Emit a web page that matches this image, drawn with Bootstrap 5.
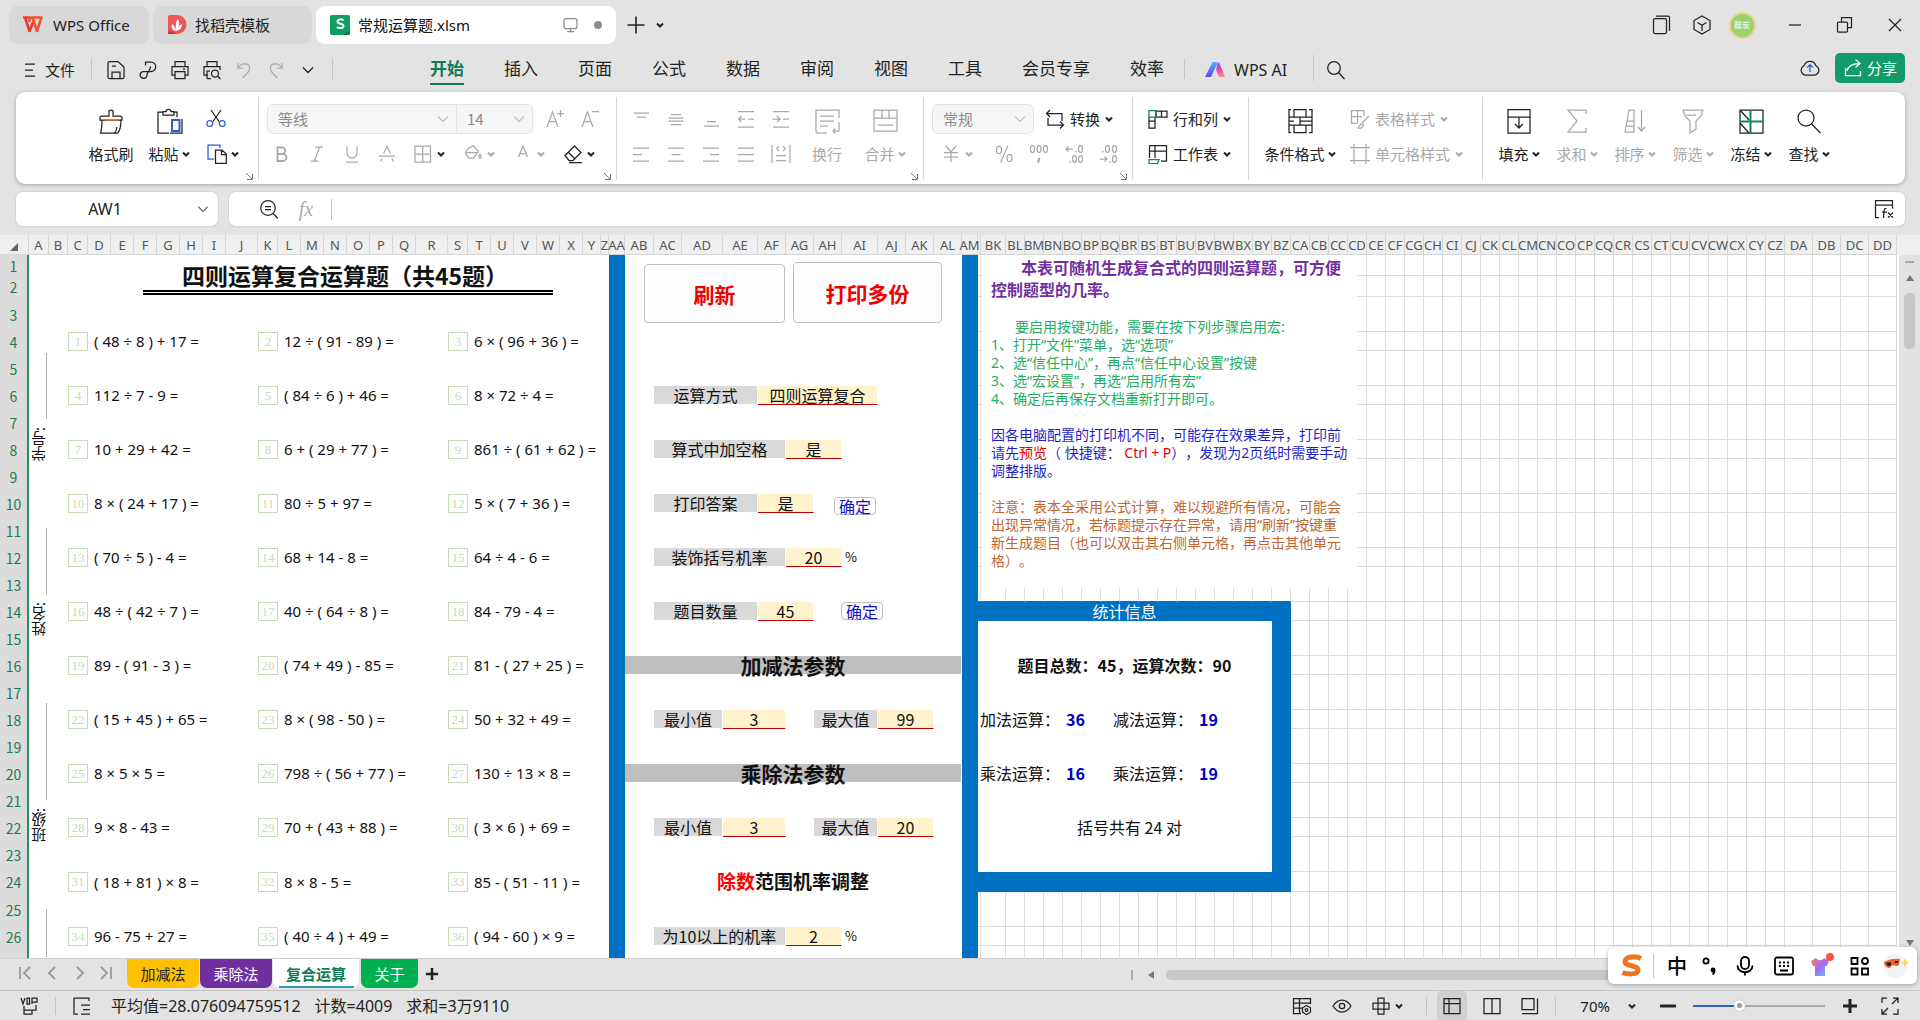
<!DOCTYPE html>
<html lang="zh-CN">
<head>
<meta charset="utf-8">
<meta name="viewport" content="width=device-width, initial-scale=1">
<title>常规运算题.xlsm - WPS Office</title>
<link href="https://cdn.jsdelivr.net/npm/bootstrap@5.3.0/dist/css/bootstrap.min.css" rel="stylesheet">
<style>
:root{--ui:"Noto Sans","Noto Sans CJK SC",sans-serif;--cell:"Noto Sans CJK SC",sans-serif;--green:#0f7b55;--blue:#0070c0}
body{font-family:var(--ui);font-size:15px;line-height:20px;color:#222;background:#e3e3e3;overflow:hidden;text-spacing-trim:space-all}
button{font:inherit;color:inherit;background:none;border:0;padding:0}
a{color:inherit;text-decoration:none}
svg.ic{width:20px;height:20px;fill:none;stroke:currentColor;stroke-width:1.25;flex:none;display:block}
svg.big{width:28px;height:28px}
svg.caret{width:8px;height:8px;fill:none;stroke:currentColor;stroke-width:2;flex:none;display:block}
.dim{color:#a9a9a9}
.slot{width:var(--w,32px);display:flex;align-items:center;justify-content:center;gap:4px;height:30px;flex:none}
.w18{--w:18px}.w26{--w:26px}.w34{--w:34px}.w35{--w:35px}.w40{--w:40px}.w50{--w:50px}
.vline{width:1px;background:#c4c4c4;flex:none}
/* title bar */
.titlebar{height:51px;padding:6px 0 7px 9px;gap:4px}
.doctab{height:38px;border-radius:9px;background:#d8d8d8;padding:0 14px;gap:10px}
.doctab.on{background:#fff;color:#111}
.avatar{width:27px;height:27px;border-radius:50%;background:#9bd26a;border:2px solid #f2cf8d;color:#fff;font:8px/22px var(--cell);text-align:center}
/* menu */
.menubar{height:41px;padding-left:20px;padding-right:15px}
.menutabs{gap:40px;font-size:17px;line-height:24px;font-family:var(--cell)}
.menutabs a{padding:5px 0;display:block}
.menutabs a.on{color:var(--green);font-weight:700;box-shadow:inset 0 -2px var(--green)}
.sharebtn{background:#129a6a;color:#fff;border-radius:5px;width:70px;height:30px}
/* ribbon */
.ribbon{margin:0 15px 0 16px;height:92px;background:#fff;border-radius:9px;box-shadow:0 1px 4px rgba(0,0,0,.28);font-family:var(--cell)}
.rg{position:relative;display:flex;padding-top:12px;height:92px;flex:none}
.rg+.rg::before{content:"";position:absolute;left:0;top:5px;bottom:4px;width:1px;background:#d4d4d4}
.rg .corner{position:absolute;right:4px;bottom:3px;width:9px;height:9px;stroke:#777}
.stack{display:flex;flex-direction:column;gap:5px}
.bigbtn{display:flex;flex-direction:column;align-items:center;width:58px;flex:none;height:66px}
.bigbtn svg.big{margin:3px 0 5px}
.bigbtn .lab{height:28px;display:flex;align-items:center;gap:3px;white-space:nowrap}
.wide{display:flex;align-items:center;gap:5px;height:30px;white-space:nowrap}
.fsel{appearance:none;height:30px;border:1px solid #e4e4e4;background:#f6f6f6;color:#8b8b8b;font-size:15px;padding:0 10px;line-height:20px;opacity:1}
.selwrap{position:relative;display:block}
.selwrap svg{position:absolute;right:9px;top:11px;width:10px;height:8px;stroke:#bbb;fill:none;stroke-width:1.2}
.gA{width:242px;padding-left:66px}.gB{width:358px;padding-left:9px}.gC{width:307px;padding-left:7px}.gD{width:209px;padding-left:9px}.gE{width:116px;padding-left:16px}.gF{width:234px;padding-left:14px}.gG{padding-left:8px}
.gB .fmt{margin-left:-3px}
/* formula bar */
.fbar{margin:8px 15px 0 16px;gap:11px;height:34px}
.fbox{background:#fff;border-radius:7px;box-shadow:0 0 0 1px #d6d6d6,0 1px 1px #b5b5b5}
.fbox input{border:0;background:none;outline:0;font:16px/24px var(--ui);color:#222;min-width:0}
/* sheet */
.sheetrow{background:#efefef;margin-top:9px;height:723px;overflow:hidden}
.sheetarea{position:relative;flex:1;min-width:0;overflow:hidden;background:linear-gradient(#efefef 20px,#fff 20px)}
.grid-sheet{table-layout:fixed;border-collapse:separate;border-spacing:0;width:1897px;font:16px/18px var(--cell);color:#111;background:#fff}
.grid-sheet td,.grid-sheet th{padding:0;box-sizing:border-box;white-space:nowrap;overflow:visible;border:0 solid #dcdcdc;border-width:0 1px 1px 0;font-weight:400}
.grid-sheet thead th{height:20px;background:#efefef;color:#555;font:13px/18px var(--ui);text-align:center;border-color:#d5d5d5;border-top:0;padding-top:1px}
.grid-sheet thead th span{display:flex;justify-content:center}
.grid-sheet tbody th{background:#dcdcdc;color:#1f7a55;font:14px/18px var(--cell);text-align:center;border-width:0 2px 0 0;border-color:#2d8b66}
.grid-sheet td.pl{border-color:#fff;background:#fff}
.grid-sheet td.bl{background:var(--blue);border-color:var(--blue)}
.grid-sheet td.above{border-bottom-color:var(--blue)}
.grid-sheet td.num{border:1px solid #c6dcb7;color:#c6dcb7;font:13px/16px "Liberation Serif",serif;text-align:center}
.grid-sheet td.eq{padding-left:6px;border-color:#fff;font:15px/18px var(--ui)}
.grid-sheet td.lb{background:#d9d9d9;border-color:#fff;text-align:center}
.grid-sheet td.in{background:#fff2cc;border-color:#fff;border-bottom-color:#c00000;text-align:center}
.grid-sheet td.bar{background:#bfbfbf;border-color:#fff;text-align:center;font:700 21px/17px var(--cell)}
.grid-sheet td.ct{border-color:#fff;text-align:center}
.grid-sheet td.ct.sum{padding-left:10px}
.grid-sheet td.n{border-color:#fff;color:#00c;font-weight:700;padding-left:3px}
.grid-sheet td.l1{border-color:#fff;padding-left:2px}
.grid-sheet td.l2{border-color:#fff;padding-left:12px}
.grid-sheet td.pc{border-color:#fff;padding-left:3px;font-size:13px}
.grid-sheet td.statshead{background:var(--blue);border-color:var(--blue);color:#fff;text-align:center}
.grid-sheet td.ttl{border-color:#fff;vertical-align:bottom;padding:0 6px 1px 9px}
.ttl h1{font:700 23px/30px var(--cell);margin:0;padding:2px 6px 0 0;text-align:center;border-bottom:5px double #000}
.grid-sheet td.sidecol{vertical-align:top;border-color:#fff;padding-top:98px}
.sidecol .rule{height:66px;border-right:1px solid #aaa;margin-right:1px}
.sidecol .rule.long{height:97px}
.sidecol .rule.last{height:48px}
.sidecol .who{height:109px;padding:8px 0 0 2px}
.sidecol .who span{display:block;writing-mode:vertical-rl;transform:rotate(180deg);font:15px/17px var(--ui)}
/* shapes lying over the cells */
.shape{position:absolute;background:#fdfdfd;border:1px solid #bfbfbf;border-radius:4px;font-family:var(--cell)}
.shape.act{color:#f00000;font-weight:700;font-size:21px}
.shape.ok{color:#11c;font-size:16px;line-height:17px;width:42px;height:18px}
.p1{left:644px;top:29px;width:141px;height:59px}.p2{left:793px;top:27px;width:149px;height:61px}
.p3{left:834px;top:262px}.p4{left:841px;top:367px}
.notes{position:absolute;left:982px;top:20px;width:375px;height:333px;background:#fff;padding:1px 0 0 9px;font:14px/18px var(--ui);white-space:nowrap}
.notes p{margin:0 0 18px}
.notes .intro{color:#7030a0;font:700 16px/22px var(--cell);display:flex;flex-direction:column}
.notes .steps{color:#27ae60}.notes .tips{color:#1f1fc8}.notes .warn{color:#c0672f}.notes b{font-weight:400;color:#e00000}
.vbar{width:21px;padding-top:20px}
.vbar .in{background:#e2e2e2;height:703px;display:flex;flex-direction:column;align-items:center}
.vbar .dash{width:9px;height:2px;background:#aaa;margin-top:6px}
.vbar .up{border:4px solid transparent;border-bottom:6px solid #777;border-top:0;margin-top:12px}
.vbar .thumb{width:11px;height:56px;background:#c6c6c6;border-radius:5px;margin-top:12px}
.vbar .dn{border:4px solid transparent;border-top:6px solid #777;border-bottom:0;margin-top:auto;margin-bottom:12px}
/* sheet tabs */
.tabstrip{height:32px;border-top:1px solid #cfcfcf;font-family:var(--cell)}
.stab{height:29px;border-radius:0 0 7px 7px;display:flex;align-items:center;justify-content:center;padding-top:1px;margin-right:1px}
.stab.a{width:72px;background:#ffc000}.stab.b{width:72px;background:#7030a0;color:#fff}
.stab.c{width:86px;background:#fff;color:var(--green);font-weight:700;background-image:linear-gradient(#2f94b8,#2f94b8);background-size:75px 2px;background-repeat:no-repeat;background-position:center bottom}
.stab.d{width:57px;background:#00b050;color:#fff;margin-left:1px}
.navs{width:27px;height:28px;display:flex;align-items:center;justify-content:center;color:#999}
.hthumb{height:10px;border-radius:5px;background:#c8c8c8}
.status{height:30px;border-top:1px solid #c6c6c6}
.stats{font-size:16px;gap:14px;margin-left:19px}
.status .viewon{background:#cfcfcf;border-radius:5px;width:30px}
.zoomer{appearance:none;width:132px;height:14px;background:linear-gradient(#2a60b8,#2a60b8) left center/47px 2px no-repeat,linear-gradient(#aaa,#aaa) center/100% 2px no-repeat;margin:0}
.zoomer::-webkit-slider-thumb{appearance:none;width:11px;height:11px;border-radius:50%;background:#999;border:3px solid #fff;box-shadow:0 0 1px #777}
.ime{position:absolute;right:3px;top:947px;width:309px;height:37px;background:#fff;border-radius:6px;box-shadow:0 1px 5px rgba(0,0,0,.3);font-family:var(--cell);color:#000}
</style>
<script src="https://cdn.jsdelivr.net/npm/bootstrap@5.3.0/dist/js/bootstrap.bundle.min.js"></script>
</head>
<body>
<svg width="0" height="0" class="position-absolute">
  <symbol id="cv" viewBox="0 0 8 8"><path d="M1 2.500l3 3 3-3"/></symbol>
  <symbol id="cn" viewBox="0 0 9 9"><path d="M1 1l6 6M7.500 2v5.500H2" fill="none"/></symbol>
</svg>

<header>
  <div class="titlebar d-flex align-items-start">
    <button class="doctab d-flex align-items-center" style="width:140px">
      <svg width="20" height="18" viewBox="0 0 20 18" fill="none"><path d="M0 1.500h6.500M2 1.500L6.500 15 11 4" stroke="#e8372c" stroke-width="2.600" stroke-linejoin="round"/><path d="M6 6l1-4.500h11.500L14 15 9.500 2" stroke="#f0532f" stroke-width="2.600" stroke-linejoin="round"/></svg>WPS Office</button>
    <button class="doctab d-flex align-items-center" style="width:159px;gap:8px">
      <svg width="20" height="20" viewBox="0 0 20 20"><path d="M3 0h7a9.500 9.500 0 0 1 0 19H1V2a2 2 0 0 1 2-2z" fill="#ee5556"/><path d="M1 17c3-2 6 0 9 2H1z" fill="#c93a42"/><path d="M9 16c-4-1-5-4-4-7 2 1 3 3 4 6 0-4-1-8 2-11 2 3 1 7-1 11 1-3 2-5 5-6 0 4-2 6-6 7z" fill="#fff"/></svg>找稻壳模板</button>
    <button class="doctab on d-flex align-items-center" style="width:300px;gap:7px">
      <svg width="21" height="20" viewBox="0 0 21 20"><rect x="0" width="20" height="20" rx="2" fill="#109e60"/><path d="M12 20l8-4v2a2 2 0 0 1-2 2z" fill="#0a7346"/><path d="M13.500 5.500c-1-1.500-6-1.800-6 1 0 3 6 1.500 6 4.500 0 2.600-5 2.600-6.500 1" fill="none" stroke="#fff" stroke-width="2"/></svg>常规运算题.xlsm
      <svg class="ic ms-auto" style="width:16px;height:16px;color:#8d8d8d" viewBox="0 0 16 16"><rect x="1" y="1.500" width="13" height="10" rx="2"/><path d="M4 14.500h7M7.500 12v2"/></svg>
      <span class="rounded-circle ms-2" style="width:8px;height:8px;background:#8d8d8d"></span>
    </button>
    <button class="slot mt-1" aria-label="新建"><svg class="ic" viewBox="0 0 20 20" style="stroke-width:1.600"><path d="M1.500 10h17M10 1.500v17"/></svg></button>
    <button class="slot w18 mt-1" aria-label="更多" style="margin-left:-5px"><svg class="caret"><use href="#cv"/></svg></button>
    <div class="ms-auto d-flex align-items-center h-100">
      <button class="slot w40" aria-label="窗口"><svg class="ic" viewBox="0 0 20 20"><rect x="1.500" y="3.500" width="13" height="15" rx="1.500"/><path d="M4 1.200h12a1.500 1.500 0 0 1 1.500 1.500V16"/></svg></button>
      <button class="slot w40" aria-label="应用"><svg class="ic" viewBox="0 0 20 20"><path d="M10 1l8 4.500v9L10 19l-8-4.500v-9zM5.500 7.500L10 10.200l4.500-2.700M10 10v6"/></svg></button>
      <button class="slot w40" aria-label="帐户"><span class="avatar">鞍炭</span></button>
      <button class="slot w50 ms-2" aria-label="最小化"><svg class="ic" viewBox="0 0 20 20"><path d="M4 10h12"/></svg></button>
      <button class="slot w50" aria-label="还原"><svg class="ic" viewBox="0 0 20 20"><rect x="2.500" y="7" width="10" height="10" rx="1"/><path d="M6.500 7V2.500h10v10H13"/></svg></button>
      <button class="slot w50" aria-label="关闭"><svg class="ic" viewBox="0 0 20 20"><path d="M4 4l12 12M16 4L4 16"/></svg></button>
    </div>
  </div>

  <nav class="menubar d-flex align-items-start">
    <button class="d-flex align-items-center mt-1" style="height:30px;gap:7px"><svg class="ic" style="width:18px" viewBox="0 0 18 20"><path d="M5 4h10M5 10h8M5 16h10"/></svg>文件</button>
    <span class="vline ms-3 mt-2" style="height:21px"></span>
    <div class="d-flex mt-1 ms-2">
      <button class="slot" aria-label="保存"><svg class="ic" viewBox="0 0 20 20"><path d="M2 3a1.500 1.500 0 0 1 1.500-1.500H12L18 7v10a1.500 1.500 0 0 1-1.500 1.500h-13A1.500 1.500 0 0 1 2 17zM6 18v-6h8v6M6 6h4"/></svg></button>
      <button class="slot" aria-label="输出为PDF"><svg class="ic" viewBox="0 0 20 20"><path d="M7.500 5.500V2h5.500a4.700 4.700 0 0 1 0 9.500H5.500a3.400 3.400 0 1 0 3.400 3.400c0-3 3.600-4 3.600-8.400"/></svg></button>
      <button class="slot" aria-label="打印"><svg class="ic" viewBox="0 0 20 20"><path d="M5 6V1.500h10V6M5 15H2V6.500h16V15h-3M5 11.500h10v7H5zM13 9h2"/></svg></button>
      <button class="slot" aria-label="打印预览"><svg class="ic" viewBox="0 0 20 20"><path d="M5 6V1.500h10V6M6 15H2V6.500h16V10M5 18.500V11h3M5 18.500h4"/><circle cx="13" cy="13.500" r="3.500"/><path d="M15.500 16l3 3"/></svg></button>
      <button class="slot dim" aria-label="撤销"><svg class="ic" viewBox="0 0 20 20"><path d="M4 3v5h5M4.500 7.500C8 2 16 3 15.500 9c0 3-4 6-7 9"/></svg></button>
      <button class="slot dim" aria-label="恢复"><svg class="ic" viewBox="0 0 20 20"><path d="M16 3v5h-5M15.500 7.500C12 2 4 3 4.500 9c0 3 4 6 7 9"/></svg></button>
      <button class="slot" aria-label="自定义"><svg class="ic" style="width:14px" viewBox="0 0 14 14"><path d="M2 4.500l5 5 5-5"/></svg></button>
    </div>
    <span class="vline mt-2 ms-2" style="height:21px"></span>
    <div class="menutabs d-flex" style="margin-left:97px">
      <a href="#" class="on">开始</a><a href="#">插入</a><a href="#">页面</a><a href="#">公式</a><a href="#">数据</a><a href="#">审阅</a><a href="#">视图</a><a href="#">工具</a><a href="#">会员专享</a><a href="#">效率</a>
    </div>
    <span class="vline mt-2" style="height:20px;margin-left:20px"></span>
    <a href="#" class="d-flex align-items-center mt-1" style="height:30px;font-size:16px;margin-left:20px;gap:7px">
      <svg width="22" height="18" viewBox="0 0 22 18"><defs><linearGradient id="ai1" x2="0" y2="1"><stop stop-color="#49b4ff"/><stop offset="1" stop-color="#6446e8"/></linearGradient><linearGradient id="ai2" x2="0" y2="1"><stop stop-color="#8a4cf0"/><stop offset=".6" stop-color="#f04bb4"/><stop offset="1" stop-color="#ff9a78"/></linearGradient></defs><path d="M7.500 1H13L6 16H0z" fill="url(#ai1)"/><path d="M12 4l2-3 6 15h-6l-3-7z" fill="url(#ai2)"/></svg>WPS AI</a>
    <span class="vline mt-1" style="height:26px;margin-left:26px"></span>
    <button class="slot w35 mt-1 ms-1" aria-label="搜索"><svg class="ic" viewBox="0 0 20 20"><circle cx="8" cy="8" r="6.300"/><path d="M12.500 12.500l6 6.500"/></svg></button>
    <div class="ms-auto d-flex align-items-center" style="gap:8px;padding-top:2px">
      <button class="slot w34" aria-label="云"><svg class="ic" viewBox="0 0 20 20"><path d="M5.500 17C2 17 0 13 2 9.500 3.500 8 4 8 4.500 7 6 2 14 2 15.500 7c.5 1 1 1 2.500 2.500C20 13 18 17 14.500 17z"/><path d="M10 14V7M7.200 9.500L10 6.700l2.800 2.800" stroke="#2d5bd8"/></svg></button>
      <button class="sharebtn d-flex align-items-center justify-content-center gap-1"><svg class="ic" viewBox="0 0 20 20"><path d="M2.500 10v7.500h15V13M4 13c1-5 5-7.500 12.500-7.500M12.500 1.500l4.500 4-4.500 4"/></svg>分享</button>
    </div>
  </nav>

  <div class="ribbon d-flex">
    <div class="rg gA">
      <button class="bigbtn"><svg class="ic big" viewBox="0 0 28 28"><path d="M12 9V6c-1.500-4 5.500-4 4 0v3h7.500A1.500 1.500 0 0 1 25 10.500V13H3v-2.500A1.500 1.500 0 0 1 4.500 9zM5 13c0 5 0 9-1.500 13H21c2-3 3-8 3-13M20 20c-.5 2.500-1 4.500-2.500 6"/><path d="M8 13h13" stroke="#e07b39"/></svg><span class="lab">格式刷</span></button>
      <button class="bigbtn"><svg class="ic big" viewBox="0 0 28 28"><path d="M8 5H3v21h11M18 5h4v5M8 8V4.500h3c0-3 5-3 5 0h3V8zM27 12v14H15"/><path d="M17 13h7.500v11H17z" stroke="#2d5bd8" stroke-width="2"/></svg><span class="lab">粘贴<svg class="caret"><use href="#cv"/></svg></span></button>
      <div class="stack">
        <button class="slot w50" aria-label="剪切"><svg class="ic" viewBox="0 0 20 20" style="margin-right:14px"><path d="M5 1l8 11.500M15 1L7 12.500"/><circle cx="3.800" cy="14.500" r="2.900" stroke="#2d5bd8"/><circle cx="16.200" cy="14.500" r="2.900" stroke="#2d5bd8"/></svg></button>
        <button class="slot w50" aria-label="复制"><svg class="ic" viewBox="0 0 20 20"><path d="M7 15H1V1h12v3" stroke="#2d5bd8"/><path d="M8.500 6h6.500l4.300 4v9.300H8.500zM14.500 6v4.500H19"/></svg><svg class="caret"><use href="#cv"/></svg></button>
      </div>
      <svg class="corner"><use href="#cn"/></svg>
    </div>
    <div class="rg gB">
      <div class="stack">
        <div class="d-flex">
          <label class="selwrap"><select class="fsel rounded-start-2" style="width:190px" aria-label="字体" disabled><option>等线</option></select><svg viewBox="0 0 10 8"><path d="M0 1.500l5 5 5-5"/></svg></label>
          <label class="selwrap"><select class="fsel rounded-end-2 border-start-0" style="width:76px" aria-label="字号" disabled><option>14</option></select><svg viewBox="0 0 10 8"><path d="M0 1.500l5 5 5-5"/></svg></label>
          <button class="slot w35 dim ms-1" aria-label="增大字号"><svg class="ic" viewBox="0 0 20 20"><path d="M2 18L7.500 3 13 18M4 12.500h7M12 4.500h7M15.500 1v7"/></svg></button>
          <button class="slot w35 dim" aria-label="减小字号"><svg class="ic" viewBox="0 0 20 20"><path d="M2 18L7.500 3 13 18M4 12.500h7M12 2.500h7"/></svg></button>
        </div>
        <div class="d-flex dim fmt">
          <button class="slot w35" aria-label="加粗"><svg class="ic" viewBox="0 0 20 20" style="stroke-width:1.800"><path d="M5.500 3.500H10a3.200 3.200 0 0 1 0 6.500H5.500zM5.500 10H11a3.400 3.400 0 0 1 0 7H5.500z"/></svg></button>
          <button class="slot w35" aria-label="斜体"><svg class="ic" viewBox="0 0 20 20"><path d="M8 3h8M3.500 17h8M12.500 3l-5 14"/></svg></button>
          <button class="slot w35" aria-label="下划线"><svg class="ic" viewBox="0 0 20 20"><path d="M5 2.500V9a5 5 0 0 0 10 0V2.500M4 18h12"/></svg></button>
          <button class="slot w35" aria-label="删除线"><svg class="ic" viewBox="0 0 20 20"><path d="M6.500 9.500L10 2.500l3.500 7M2 12h16M5 14.500l-1.500 3M15 14.500l1.500 3"/></svg></button>
          <button class="slot w50" aria-label="边框"><svg class="ic" viewBox="0 0 20 20"><path d="M2 2h15.500v16H2zM9.700 2v16M2 10h15.500"/></svg><svg class="caret text-dark"><use href="#cv"/></svg></button>
          <button class="slot w50" aria-label="填充颜色"><svg class="ic" viewBox="0 0 20 20"><path d="M4.500 5l6-3.500 5 6-5 6.500H6L2.500 9.500zM3 8.500h12M17 10c2 3 1.500 4 0 4s-1.500-1.500 0-4"/></svg><svg class="caret"><use href="#cv"/></svg></button>
          <button class="slot w50" aria-label="字体颜色"><svg class="ic" viewBox="0 0 20 20"><path d="M5.500 13L10 2l4.500 11M7 9.500h6"/></svg><svg class="caret"><use href="#cv"/></svg></button>
          <button class="slot w50 text-dark" aria-label="清除"><svg class="ic" viewBox="0 0 20 20"><path d="M2 11.500L11.500 2l6.500 6.500-8 8H6zM5.500 8.500l6 6M6 18.500h13"/></svg><svg class="caret"><use href="#cv"/></svg></button>
        </div>
      </div>
      <svg class="corner"><use href="#cn"/></svg>
    </div>
    <div class="rg gC dim">
      <div class="stack">
        <div class="d-flex">
          <button class="slot w35" aria-label="顶端对齐"><svg class="ic" viewBox="0 0 20 20"><path d="M3 4h15M6 8h9"/></svg></button>
          <button class="slot w35" aria-label="垂直居中"><svg class="ic" viewBox="0 0 20 20"><path d="M5 5.500h10M2.500 9h15M2.500 12h15M5 15.500h10"/></svg></button>
          <button class="slot w35" aria-label="底端对齐"><svg class="ic" viewBox="0 0 20 20"><path d="M6 12.500h9M3 17h15"/></svg></button>
          <button class="slot w35" aria-label="减少缩进"><svg class="ic" viewBox="0 0 20 20"><path d="M2 2.500h16M2 18h16M2 10h7M5.500 7l-3 3 3 3M12 10h6"/></svg></button>
          <button class="slot w35" aria-label="增加缩进"><svg class="ic" viewBox="0 0 20 20"><path d="M2 2.500h16M2 18h16M1.500 10H9M6 7l3 3-3 3M12 10h6"/></svg></button>
        </div>
        <div class="d-flex">
          <button class="slot w35" aria-label="左对齐"><svg class="ic" viewBox="0 0 20 20"><path d="M2 4h16M2 10.500h9M2 17h16"/></svg></button>
          <button class="slot w35" aria-label="居中"><svg class="ic" viewBox="0 0 20 20"><path d="M2 4h16M5.500 10.500h9M2 17h16"/></svg></button>
          <button class="slot w35" aria-label="右对齐"><svg class="ic" viewBox="0 0 20 20"><path d="M2 4h16M9 10.500h9M2 17h16"/></svg></button>
          <button class="slot w35" aria-label="两端对齐"><svg class="ic" viewBox="0 0 20 20"><path d="M2 4h16M2 10.500h16M2 17h16"/></svg></button>
          <button class="slot w35" aria-label="分散对齐"><svg class="ic" viewBox="0 0 20 20"><path d="M1 1v18M19 1v18M8 2L5.500 4.500 8 7M12 2l2.500 2.500L12 7M5 11.500h10M5 16.500h10"/></svg></button>
        </div>
      </div>
      <button class="bigbtn"><svg class="ic big" viewBox="0 0 28 28"><path d="M14 26H5a2 2 0 0 1-2-2V3h23v8M7 9h14M7 14h14M7 19h8M26 15v9h-6M22.500 21.500L20 24l2.500 2.500"/></svg><span class="lab">换行</span></button>
      <button class="bigbtn"><svg class="ic big" viewBox="0 0 28 28"><path d="M3 3h23v21H3zM3 11h23M11 3v8M18 3v8M7 18h15"/></svg><span class="lab">合并<svg class="caret"><use href="#cv"/></svg></span></button>
      <svg class="corner"><use href="#cn"/></svg>
    </div>
    <div class="rg gD">
      <div class="stack">
        <div class="d-flex">
          <label class="selwrap"><select class="fsel rounded-2" style="width:102px" aria-label="数字格式" disabled><option>常规</option></select><svg viewBox="0 0 10 8"><path d="M0 1.500l5 5 5-5"/></svg></label>
          <button class="wide" style="margin-left:11px"><svg class="ic" viewBox="0 0 20 20"><path d="M5 1L1.500 4.500 5 8M2 4.500h15V12M15 12.500l3.500 3.500-3.500 3.500M18 16H3V9"/></svg>转换<svg class="caret"><use href="#cv"/></svg></button>
        </div>
        <div class="d-flex dim">
          <button class="slot w50" aria-label="货币"><svg class="ic" viewBox="0 0 20 20"><path d="M5 2l5 6 5-6M3 8.500h14M3 13h14M10 8v10"/></svg><svg class="caret"><use href="#cv"/></svg></button>
          <button class="slot w35 ms-1" aria-label="百分比"><svg class="ic" viewBox="0 0 20 20"><path d="M14 1.500L6.500 18.500"/><ellipse cx="5" cy="6" rx="2.500" ry="3.700"/><ellipse cx="15.500" cy="14" rx="2.500" ry="3.700"/></svg></button>
          <button class="slot w35" aria-label="千位分隔"><svg class="ic" viewBox="0 0 20 20"><ellipse cx="3.500" cy="5" rx="2" ry="3.500"/><ellipse cx="10" cy="5" rx="2" ry="3.500"/><ellipse cx="16.500" cy="5" rx="2" ry="3.500"/><path d="M10 14v1.500l-1 3" stroke-width="2.200"/></svg></button>
          <button class="slot w35" aria-label="增加小数位"><svg class="ic" viewBox="0 0 20 20"><path d="M9 5H2M4.500 2.500L2 5l2.500 2.500M12 7v1.500M6 17v1.500"/><ellipse cx="16.500" cy="5" rx="2" ry="3.500"/><ellipse cx="10.500" cy="15" rx="2" ry="3.500"/><ellipse cx="16.500" cy="15" rx="2" ry="3.500"/></svg></button>
          <button class="slot w34" aria-label="减少小数位"><svg class="ic" viewBox="0 0 20 20"><path d="M2 15h7M6.500 12.500L9 15l-2.500 2.500M12 17v1.500M5 7v1.500"/><ellipse cx="9.500" cy="5" rx="2" ry="3.500"/><ellipse cx="16.500" cy="5" rx="2" ry="3.500"/><ellipse cx="16.500" cy="15" rx="2" ry="3.500"/></svg></button>
        </div>
      </div>
      <svg class="corner"><use href="#cn"/></svg>
    </div>
    <div class="rg gE">
      <div class="stack">
        <button class="wide"><svg class="ic" viewBox="0 0 20 20"><path d="M8 2h11v6H8zM13.500 2v6M1 12h6v7H1zM1 12V8M7 8v4"/><path d="M1 1.500h7V8H1z" stroke="#11855c"/></svg>行和列<svg class="caret"><use href="#cv"/></svg></button>
        <button class="wide"><svg class="ic" viewBox="0 0 20 20"><path d="M1.500 14V1.500h17V17H13M1.500 7h17M7 1.500V14"/><path d="M1 15.500h10l-1.500 4H1z" stroke="#11855c"/></svg>工作表<svg class="caret"><use href="#cv"/></svg></button>
      </div>
    </div>
    <div class="rg gF">
      <button class="bigbtn" style="width:76px"><svg class="ic big" viewBox="0 0 28 28"><path d="M5 2.500H3v23h2M23 2.500h3v23h-3M8 2.500h12V10H8zM8 18h12v7.500H8zM3 10h5M3 14h5M3 18h5M20 10h6M20 18h6M14 10v8M14 14h12"/></svg><span class="lab">条件格式<svg class="caret"><use href="#cv"/></svg></span></button>
      <div class="stack dim ms-2 ps-1">
        <button class="wide"><svg class="ic" viewBox="0 0 20 20"><path d="M8 14H1.500V1.500H14V7M1.500 7.500H12M7.500 1.500V13M19 7l-7 7M8 19c3 1 6-1 5-4-3-1-3 2-5 4z"/></svg>表格样式<svg class="caret"><use href="#cv"/></svg></button>
        <button class="wide"><svg class="ic" viewBox="0 0 20 20"><path d="M4 0v20M16 0v20M0 3.500h20M0 16.500h20"/></svg>单元格样式<svg class="caret"><use href="#cv"/></svg></button>
      </div>
    </div>
    <div class="rg gG">
      <button class="bigbtn"><svg class="ic big" viewBox="0 0 28 28"><path d="M3 10V2.500h22V10zM8 10H3v16h22V10h-5M14 10v11M10 17l4 4 4-4"/></svg><span class="lab">填充<svg class="caret"><use href="#cv"/></svg></span></button>
      <button class="bigbtn dim"><svg class="ic big" viewBox="0 0 28 28"><path d="M23 7V3H5l9 11-9 11h18v-4"/></svg><span class="lab">求和<svg class="caret"><use href="#cv"/></svg></span></button>
      <button class="bigbtn dim"><svg class="ic big" viewBox="0 0 28 28"><path d="M4 25L8 3h5v22zM6 14h7M5 19h8M20.500 3v21M17 20l3.500 4 3.500-4"/></svg><span class="lab">排序<svg class="caret"><use href="#cv"/></svg></span></button>
      <button class="bigbtn dim"><svg class="ic big" viewBox="0 0 28 28"><path d="M4 3h20l-2 6-5 5v8l-6 4V14L6 9zM7 8h10"/></svg><span class="lab">筛选<svg class="caret"><use href="#cv"/></svg></span></button>
      <button class="bigbtn"><svg class="ic big" viewBox="0 0 28 28"><path d="M3 3h23v23H3zM3 3l9 10M3 16l9 10"/><path d="M13.500 3v23M3 14.500h23" stroke="#11855c" stroke-width="2"/></svg><span class="lab">冻结<svg class="caret"><use href="#cv"/></svg></span></button>
      <button class="bigbtn"><svg class="ic big" viewBox="0 0 28 28"><circle cx="11" cy="11" r="8"/><path d="M16.500 17l9 9"/></svg><span class="lab">查找<svg class="caret"><use href="#cv"/></svg></span></button>
    </div>
  </div>

  <div class="fbar d-flex">
    <div class="fbox d-flex align-items-center" style="width:202px"><input class="text-center flex-fill" value="AW1" aria-label="名称框" style="width:100px"><svg class="ic" style="width:18px;height:18px;color:#666;margin-right:6px" viewBox="0 0 20 20"><path d="M5 7.500l5 5.500 5-5.500"/></svg></div>
    <div class="fbox d-flex align-items-center flex-fill">
      <span style="width:28px"></span>
      <button class="slot" style="width:24px" aria-label="缩放"><svg class="ic" viewBox="0 0 20 20"><circle cx="9" cy="9" r="7.300"/><path d="M6 7.500h6M6 10.500h6M14 14.500l5 5"/></svg></button>
      <button class="slot w50 fst-italic" style="font:italic 20px/24px 'Liberation Serif',serif;color:#aaa">fx</button>
      <span class="vline" style="height:21px"></span>
      <input class="flex-fill" aria-label="编辑栏">
      <button class="slot w35 me-1" aria-label="函数"><svg class="ic" viewBox="0 0 20 20"><path d="M5 18.500H1.500V1.500h17v8M1.500 6h17M12.500 9.500c-3-1-2.500 3-3 9.500M8 13h5M14 13.500l5 5M19 13.500l-5 5"/></svg></button>
    </div>
  </div>
</header>

<main class="sheetrow d-flex">
  <div class="sheetarea">
    <table class="grid-sheet" id="sheet"></table>
    <button class="shape act p1">刷新</button>
    <button class="shape act p2">打印多份</button>
    <button class="shape ok p3">确定</button>
    <button class="shape ok p4">确定</button>
    <div class="notes">
      <div class="intro"><span style="padding-left:30px">本表可随机生成复合式的四则运算题，可方便</span><span>控制题型的几率。</span></div>
      <p class="steps" style="margin-top:18px"><span class="ps-4">要启用按键功能，需要在按下列步骤启用宏:</span><br>1、打开“文件”菜单，选“选项”<br>2、选“信任中心”，再点“信任中心设置”按键<br>3、选“宏设置”，再选“启用所有宏”<br>4、确定后再保存文档重新打开即可。</p>
      <p class="tips">因各电脑配置的打印机不同，可能存在效果差异，打印前<br>请先<b>预览</b>（ 快捷键： <b>Ctrl + P</b>），发现为2页纸时需要手动<br>调整排版。</p>
      <p class="warn">注意：表本全采用公式计算，难以规避所有情况，可能会<br>出现异常情况，若标题提示存在异常，请用“刷新”按键重<br>新生成题目（也可以双击其右侧单元格，再点击其他单元<br>格）。</p>
    </div>
  </div>
  <div class="vbar"><div class="in"><i class="dash"></i><i class="up"></i><i class="thumb"></i><i class="dn"></i></div></div>
</main>

<footer>
  <div class="tabstrip d-flex">
    <div class="d-flex" style="padding-left:11px;width:127px">
      <button class="navs" aria-label="首张"><svg class="ic" viewBox="0 0 20 20" style="stroke-width:1.800"><path d="M5 4v12M15 4l-6 6 6 6"/></svg></button>
      <button class="navs" aria-label="上一张"><svg class="ic" viewBox="0 0 20 20" style="stroke-width:1.800"><path d="M13 4l-6 6 6 6"/></svg></button>
      <button class="navs" aria-label="下一张"><svg class="ic" viewBox="0 0 20 20" style="stroke-width:1.800"><path d="M8 4l6 6-6 6"/></svg></button>
      <button class="navs" aria-label="末张"><svg class="ic" viewBox="0 0 20 20" style="stroke-width:1.800"><path d="M5 4l6 6-6 6M15 4v12"/></svg></button>
    </div>
    <a href="#" class="stab a">加减法</a><a href="#" class="stab b">乘除法</a><a href="#" class="stab c">复合运算</a><a href="#" class="stab d">关于</a>
    <button class="slot w26" aria-label="新建工作表"><svg class="ic" style="width:14px;height:14px;stroke-width:2.500" viewBox="0 0 14 14"><path d="M7 1v12M1 7h12"/></svg></button>
    <div class="d-flex align-items-center" style="margin-left:686px;flex:1">
      <span style="width:2px;height:10px;background:#aaa"></span>
      <svg width="8" height="10" style="margin:0 11px 0 14px"><path d="M7 1v8L1 5z" fill="#777"/></svg>
      <span class="hthumb flex-fill"></span><span style="width:190px"></span>
    </div>
  </div>
  <div class="status d-flex align-items-center">
    <div class="slot" style="width:32px;margin-left:14px"><svg class="ic" viewBox="0 0 20 20"><path d="M1 2l2 6 2-6M7 2v6h2.500V2zM12 8V2h5v4h-5M4 10v8h8v-4H4M12 14h4V9"/></svg></div>
    <span class="vline" style="height:18px;margin:0 16px 0 9px"></span>
    <svg class="ic" viewBox="0 0 20 20"><path d="M17 5V2H2v16h4M9 9h9M11 13.500h7M9 18h9"/></svg>
    <div class="stats d-flex"><span>平均值=28.076094759512</span><span>计数=4009</span><span>求和=3万9110</span></div>
    <div class="ms-auto d-flex align-items-center" style="padding-right:17px">
      <button class="slot w40" aria-label="表格护眼"><svg class="ic" viewBox="0 0 20 20"><path d="M9 17.500H1.500v-15h17V8M1.500 7h17M1.500 12H10M7.500 2.500v15M14.500 9.500l4 2.300v4.400l-4 2.300-4-2.300v-4.400z"/><circle cx="14.500" cy="14" r="1.300"/></svg></button>
      <button class="slot w40" aria-label="护眼"><svg class="ic" viewBox="0 0 20 20"><path d="M1 10c5-8 13-8 18 0-5 8-13 8-18 0z"/><circle cx="10" cy="10" r="2.700"/></svg></button>
      <button class="slot w50" aria-label="阅读"><svg class="ic" viewBox="0 0 20 20"><path d="M7 7V2h6v5h5v6h-5v5H7v-5H2V7zM7 7h6v6H7z"/></svg><svg class="caret"><use href="#cv"/></svg></button>
      <span class="vline" style="height:18px;margin:0 10px 0 14px"></span>
      <button class="slot viewon" aria-label="普通"><svg class="ic" viewBox="0 0 20 20"><path d="M2 2.500h16v15H2zM2 7.500h16M7 2.500v15"/></svg></button>
      <button class="slot w50" aria-label="分页"><svg class="ic" viewBox="0 0 20 20"><path d="M2 2.500h16v15H2zM10 2.500v15"/></svg></button>
      <button class="slot w26" aria-label="布局"><svg class="ic" viewBox="0 0 20 20"><path d="M2 2.500h12v11H2zM17.500 2.500v15H2"/></svg></button>
      <span class="vline" style="height:18px;margin:0 24px 0 12px"></span>
      <span>70%</span>
      <svg class="caret" style="margin:0 24px 0 18px"><use href="#cv"/></svg>
      <svg class="ic" style="width:16px;height:16px;stroke-width:3" viewBox="0 0 16 16"><path d="M0 8h16"/></svg>
      <input type="range" class="zoomer" aria-label="缩放" min="0" max="100" value="34" style="margin:0 18px 0 17px">
      <svg class="ic" style="width:14px;height:14px;stroke-width:3" viewBox="0 0 14 14"><path d="M7 0v14M0 7h14"/></svg>
      <button class="slot w26" style="margin-left:20px" aria-label="全屏"><svg class="ic" viewBox="0 0 20 20"><path d="M2 7V2h5M13 2h5v5M18 13v5h-5M7 18H2v-5M12 8l5.500-5.500M8 12l-5.500 5.500"/></svg></button>
    </div>
  </div>
</footer>

<div class="ime d-flex align-items-center">
  <svg width="24" height="24" viewBox="0 0 24 24" style="margin:0 9px 0 12px"><path d="M21 4.500C16 2 5.500 2 5 7.500c-.5 5 13 3.500 13 8.500 0 5-11 4.500-15.500 2.500" fill="none" stroke="#ee7623" stroke-width="5"/></svg>
  <span class="vline" style="height:24px"></span>
  <span class="slot" style="width:46px;font-size:20px;font-weight:500">中</span>
  <svg class="ic" style="stroke-width:1.800;color:#000;width:20px" viewBox="0 0 20 20"><circle cx="6" cy="5" r="2.600"/><circle cx="13" cy="14" r="1.500" fill="#000"/><path d="M14.500 14c0 2-1 4-2 4.500"/></svg>
  <span class="slot w50"><svg class="ic" style="stroke-width:1.800" viewBox="0 0 20 20"><rect x="6" y="1" width="8" height="12" rx="4"/><path d="M2.500 9.500c0 9 15 9 15 0M10 16v3.500"/></svg></span>
  <span class="slot" style="width:27px"><svg class="ic" style="stroke-width:1.800" viewBox="0 0 20 20"><rect x="1" y="1.500" width="18" height="17" rx="2"/><path d="M5 6.500h2M9 6.500h2M13 6.500h2M5 10h2M9 10h2M13 10h2M6 14.500h8"/></svg></span>
  <span class="slot w50"><svg width="26" height="28" viewBox="0 0 26 28"><defs><linearGradient id="sh" x2="1" y2="1"><stop stop-color="#ff7a59"/><stop offset=".5" stop-color="#a86af5"/><stop offset="1" stop-color="#59c8ff"/></linearGradient></defs><path d="M2 9l5-3c2 3 6 3 8 0l5 3-2 5h-2v10H6V14H4z" fill="url(#sh)"/><circle cx="21" cy="5" r="4" fill="#ff5436"/></svg></span>
  <span class="slot w26"><svg class="ic" style="stroke-width:1.800" viewBox="0 0 20 20"><path d="M1.500 2h6v6h-6zM1.500 12.500h6v6h-6zM12 12.500h6v6h-6z"/><circle cx="15" cy="5" r="3"/></svg></span>
  <span class="slot" style="width:44px"><svg width="28" height="26" viewBox="0 0 28 26"><circle cx="14" cy="13" r="12" fill="#f4f4f4"/><path d="M3 9c5-3 11-4 16-3l-1 6c-3 2-5 0-6 0s-3 4-5 3-4-3-4-6z" fill="#e8622a"/><path d="M5 10l5-1v3c-2 2-4 1-5-2z" fill="#222"/><path d="M14 8l3 0v2h-3z" fill="#222"/><path d="M24 5l1.500 3.500L28 10l-2.500 1L24 14l-1-3-3-1 3-1.500z" fill="#ffd84a"/></svg></span>
</div>

<script>
// Column names and widths, left to right
const cols = [];
const add = (names, w) => names.split(' ').forEach(n => cols.push([n, w]));
add('A', 20); add('B', 19);
['C D,E,F,G,H,I J', 'K L,M,N,O,P,Q R', 'S T,U,V,W,X'].forEach(b => {
  const [a, m, z] = b.split(' ');
  add(a, 20); m.split(',').forEach(n => add(n, 23)); if (z) add(z, 32);
});
add('Y', 18); add('Z', 8); add('AA', 16); add('AB', 29); add('AC', 28); add('AD', 41); add('AE', 35);
add('AF AG AH', 28); add('AI', 36); add('AJ AK AL', 28); add('AM', 16); add('BJ', 3); add('BK', 25);
for (let c = 76; c <= 90; c++) add('B' + String.fromCharCode(c), 19);
for (let c = 65; c <= 90; c++) add('C' + String.fromCharCode(c), 19);
add('DA DB DC DD', 28);
const ix = Object.fromEntries(cols.map((c, i) => [c[0], i]));
const rowH = r => r <= 2 ? 21 : r % 2 ? 35 : 19;

// Cells with content: row -> [first column, last column, class, html, rowspan]
const cells = {};
const put = (r, a, b, cls, html, span = 1) => (cells[r] ??= []).push([ix[a], ix[b], cls, html, span]);
const quiz = ['( 48 ÷ 8 ) + 17 =','12 ÷ ( 91 - 89 ) =','6 × ( 96 + 36 ) =','112 ÷ 7 - 9 =','( 84 ÷ 6 ) + 46 =','8 × 72 ÷ 4 =','10 + 29 + 42 =','6 + ( 29 + 77 ) =','861 ÷ ( 61 + 62 ) =','8 × ( 24 + 17 ) =','80 ÷ 5 + 97 =','5 × ( 7 + 36 ) =','( 70 ÷ 5 ) - 4 =','68 + 14 - 8 =','64 ÷ 4 - 6 =','48 ÷ ( 42 ÷ 7 ) =','40 ÷ ( 64 ÷ 8 ) =','84 - 79 - 4 =','89 - ( 91 - 3 ) =','( 74 + 49 ) - 85 =','81 - ( 27 + 25 ) =','( 15 + 45 ) + 65 =','8 × ( 98 - 50 ) =','50 + 32 + 49 =','8 × 5 × 5 =','798 ÷ ( 56 + 77 ) =','130 ÷ 13 × 8 =','9 × 8 - 43 =','70 + ( 43 + 88 ) =','( 3 × 6 ) + 69 =','( 18 + 81 ) × 8 =','8 × 8 - 5 =','85 - ( 51 - 11 ) =','96 - 75 + 27 =','( 40 ÷ 4 ) + 49 =','( 94 - 60 ) × 9 ='];
const who = t => `<div class="who"><span>${t}:</span></div>`;
put(1, 'A', 'A', 'sidecol', '<div class="rule"></div>' + who('学号') + '<div class="rule"></div>' + who('姓名') + '<div class="rule long"></div>' + who('班级') + '<div class="rule last"></div>', 27);
put(1, 'F', 'W', 'ttl', '<h1>四则运算复合运算题（共45题）</h1>', 2);
quiz.forEach((q, i) => {
  const r = 4 + 2 * Math.floor(i / 3), [n, a, b] = [['C','D','J'],['K','L','R'],['S','T','Y']][i % 3];
  put(r, n, n, 'num', i + 1); put(r, a, b, 'eq', q);
});
const field = (r, a, b, t, c, d, v) => { put(r, a, b, 'lb', t); put(r, c, d, 'in', v); };
field(6, 'AC', 'AE', '运算方式', 'AF', 'AI', '四则运算复合');
field(8, 'AC', 'AF', '算式中加空格', 'AG', 'AH', '是');
field(10, 'AC', 'AE', '打印答案', 'AF', 'AG', '是');
field(12, 'AC', 'AF', '装饰括号机率', 'AG', 'AH', '20'); put(12, 'AI', 'AI', 'pc', '%');
field(14, 'AC', 'AE', '题目数量', 'AF', 'AG', '45');
put(16, 'AB', 'AL', 'bar', '加减法参数'); put(20, 'AB', 'AL', 'bar', '乘除法参数');
[[18, '99'], [22, '20']].forEach(([r, v]) => { field(r, 'AC', 'AD', '最小值', 'AE', 'AF', '3'); field(r, 'AH', 'AI', '最大值', 'AJ', 'AK', v); });
put(24, 'AB', 'AL', 'ct', '<span style="font:700 19px/18px var(--cell)"><span style="color:#f00">除数</span>范围机率调整</span>');
field(26, 'AC', 'AF', '为10以上的机率', 'AG', 'AH', '2'); put(26, 'AI', 'AI', 'pc', '%');
put(14, 'BJ', 'BY', 'statshead', '统计信息');
put(16, 'BJ', 'BY', 'ct', '<b>题目总数：45，运算次数：90</b>');
[[18, '加', '36', '减', '19'], [20, '乘', '16', '乘', '19']].forEach(([r, a, x, b, y]) => {
  put(r, 'BJ', 'BN', 'l1', a + '法运算：'); put(r, 'BO', 'BP', 'n', x); put(r, 'BQ', 'BU', 'l2', b + '法运算：'); put(r, 'BV', 'BW', 'n', y);
});
put(22, 'BJ', 'BY', 'ct sum', '括号共有 24 对');

const shade = (r, c) => {
  if (c === ix.AA || c === ix.AM) return 'bl';
  if (c < ix.AM) return 'pl';
  if (r === 13 && c <= ix.BZ) return 'above';
  if (r >= 14 && r <= 24 && c <= ix.BZ) return r === 14 || r === 24 || c === ix.BZ ? 'bl' : 'pl';
  return '';
};
let h = '<colgroup><col style="width:29px">' + cols.map(c => `<col style="width:${c[1]}px">`).join('') + '</colgroup><thead><tr><th><svg width="8" height="8"><path d="M8 0v8H0z" fill="#666"/></svg></th>' +
  cols.map(c => `<th><span>${c[0] === 'BJ' ? '' : c[0]}</span></th>`).join('') + '</tr></thead><tbody>';
const taken = new Set();
for (let r = 1; r <= 27; r++) {
  h += `<tr style="height:${rowH(r)}px"><th>${r < 27 ? r : ''}</th>`;
  for (let c = 0; c < cols.length; c++) {
    if (taken.has(r + ',' + c)) continue;
    const d = (cells[r] || []).find(x => x[0] === c);
    if (!d) { h += `<td class="${shade(r, c)}"></td>`; continue; }
    for (let y = r; y < r + d[4]; y++) for (let x = d[0]; x <= d[1]; x++) taken.add(y + ',' + x);
    h += `<td class="${d[2]}" colspan="${d[1] - d[0] + 1}" rowspan="${d[4]}">${d[3]}</td>`;
  }
  h += '</tr>';
}
document.getElementById('sheet').innerHTML = h + '</tbody>';
</script>
</body>
</html>
